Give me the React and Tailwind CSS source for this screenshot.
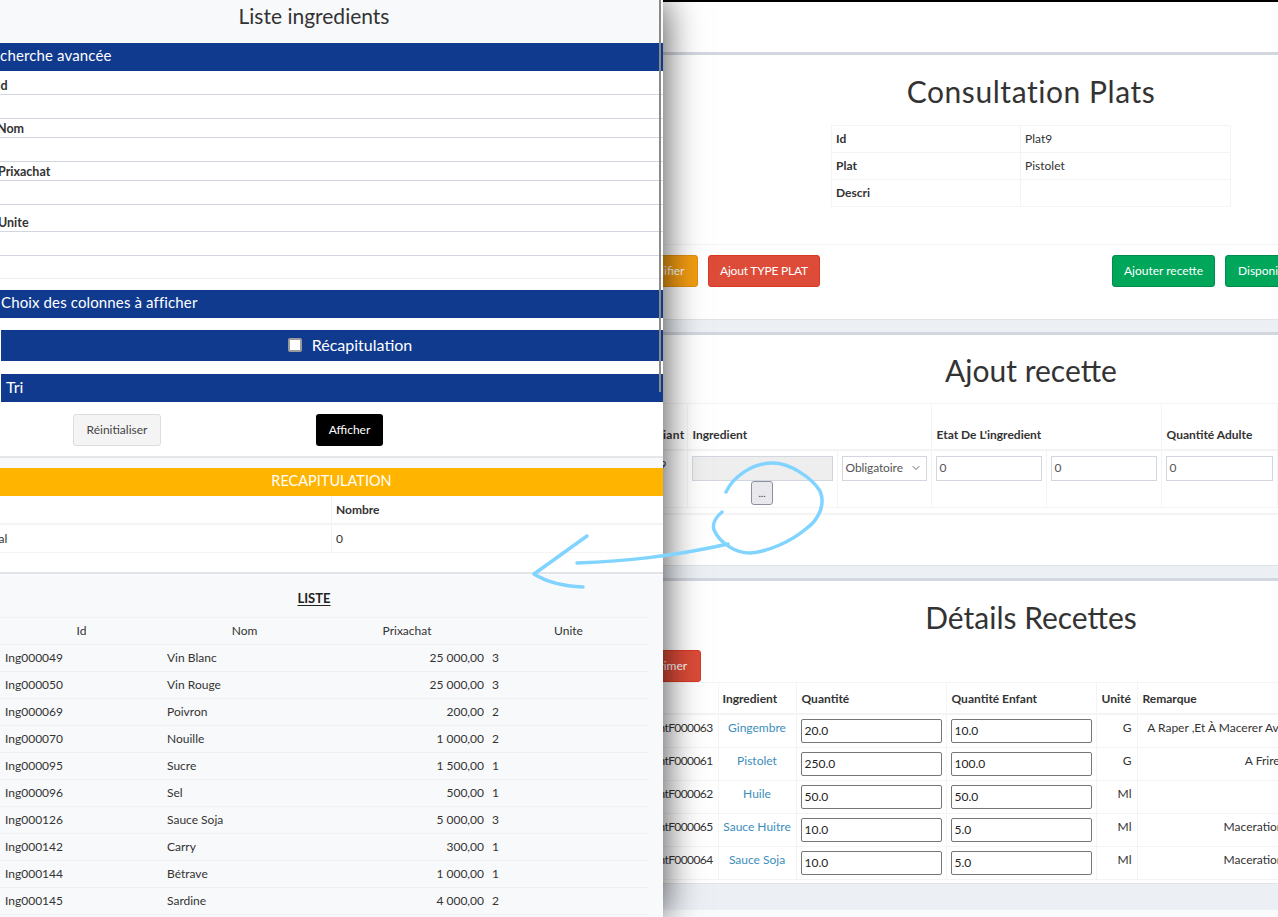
import { ChevronDown } from 'lucide-react';

const listeRows = [
    ['Ing000049', 'Vin Blanc', '25 000,00', '3'],
    ['Ing000050', 'Vin Rouge', '25 000,00', '3'],
    ['Ing000069', 'Poivron', '200,00', '2'],
    ['Ing000070', 'Nouille', '1 000,00', '2'],
    ['Ing000095', 'Sucre', '1 500,00', '1'],
    ['Ing000096', 'Sel', '500,00', '1'],
    ['Ing000126', 'Sauce Soja', '5 000,00', '3'],
    ['Ing000142', 'Carry', '300,00', '1'],
    ['Ing000144', 'Bétrave', '1 000,00', '1'],
    ['Ing000145', 'Sardine', '4 000,00', '2'],
];

const recetteRows = [
    ['IngredientF000063', 'Gingembre', '20.0', '10.0', 'G', 'A Raper ,Et À Macerer Avec Le Citron Et Sel.'],
    ['IngredientF000061', 'Pistolet', '250.0', '100.0', 'G', 'A Frire'],
    ['IngredientF000062', 'Huile', '50.0', '50.0', 'Ml', ''],
    ['IngredientF000065', 'Sauce Huitre', '10.0', '5.0', 'Ml', 'Maceration Au'],
    ['IngredientF000064', 'Sauce Soja', '10.0', '5.0', 'Ml', 'Maceration Au'],
];

const Band = ({ children, className = '' }) => (
    <div className={`bg-[#0f3a8e] text-white text-[15px] flex items-center ${className}`}>{children}</div>
);

const Field = ({ label, labelHeight, labelClass = '-ml-[2px]' }) => (
    <>
        <div className={`${labelHeight} flex items-end border-b border-[#d2d6de]`}>
            <span className={`${labelClass} text-[12.5px] leading-[16px] font-bold text-[#333]`}>{label}</span>
        </div>
        <div className="h-[24px] border-b border-[#d2d6de]" />
    </>
);

const Drawer = () => (
    <aside className="relative z-10 w-[663px] h-[917px] shrink-0 overflow-hidden bg-white shadow-[0_0_36px_rgba(0,0,0,0.75)]">
        <div className="h-[43px] bg-[#f8f9fb] flex items-center justify-center pr-[35px] pb-[12px] text-[21px] text-[#333]">
            Liste ingredients
        </div>
        <Band className="h-[28px] pb-[3px]">
            <span className="-ml-[17px] whitespace-nowrap tracking-[0.13px]">Recherche avancée</span>
        </Band>
        <Field label="Id" labelHeight="h-[24px]" labelClass="-ml-[3px]" />
        <Field label="Nom" labelHeight="h-[19px]" labelClass="-ml-[3px]" />
        <Field label="Prixachat" labelHeight="h-[19px]" />
        <Field label="Unite" labelHeight="h-[27px]" />
        <div className="h-[23px] border-b border-[#eeeeee]" />

        <Band className="mt-[11px] h-[28px] pl-[1px] pb-[3px] tracking-[0.13px]">Choix des colonnes à afficher</Band>
        <Band className="mt-[12px] ml-[1px] h-[31px] justify-center gap-[10px] pl-[36px] pb-[1px] text-[16px]">
            <span className="w-[14px] h-[14px] bg-white border-2 border-[#9a9a9a] rounded-[2px]" />
            <span>Récapitulation</span>
        </Band>
        <Band className="mt-[13px] ml-[1px] h-[28px] pl-[5px] pb-[2px] text-[16px]">Tri</Band>

        <div className="mt-[12px] ml-[73px] flex gap-[155px]">
            <button className="w-[88px] h-[32px] bg-[#f4f4f4] border border-[#dddddd] rounded-[3px] text-[12px] text-[#444]">Réinitialiser</button>
            <button className="w-[67px] h-[32px] bg-black rounded-[3px] text-[12px] text-white">Afficher</button>
        </div>

        <div className="mt-[10px] h-[12px] bg-[#f8f9fb] border-t-2 border-[#e6e6e6]" />
        <div className="h-[28px] pb-[3px] bg-[#ffb400] text-white text-[14.5px] flex items-center justify-center">RECAPITULATION</div>
        <div className="flex h-[29px] border-b-2 border-[#f4f4f4] text-[12px] font-bold text-[#333]">
            <div className="w-[332px] border-r border-[#f4f4f4]" />
            <div className="flex items-center pl-[4px]">Nombre</div>
        </div>
        <div className="flex h-[28px] border-b border-[#f4f4f4] text-[12px] text-[#333]">
            <div className="w-[332px] border-r border-[#f4f4f4] flex items-center">
                <span className="-ml-[18px]">Total</span>
            </div>
            <div className="flex items-center pl-[4px]">0</div>
        </div>
        <div className="h-[21px] border-b-2 border-[#e2e4e8]" />

        <div className="bg-[#f8f9fb] h-[345px]">
            <div className="h-[43px] pt-[15px] w-[628px] text-center text-[13px] font-bold text-[#222]">
                <span className="underline underline-offset-2">LISTE</span>
            </div>
            <table className="w-[649px] table-fixed border-collapse text-[12px] text-[#333]">
                <thead>
                    <tr className="h-[27px] border-y border-[#eef0f2] font-normal">
                        <th className="w-[163px] font-normal">Id</th>
                        <th className="w-[163px] font-normal">Nom</th>
                        <th className="w-[162px] font-normal">Prixachat</th>
                        <th className="font-normal">Unite</th>
                    </tr>
                </thead>
                <tbody>
                    {listeRows.map((row) => (
                        <tr key={row[0]} className="h-[27px] border-b border-[#eef0f2]">
                            <td className="pl-[5px]">{row[0]}</td>
                            <td className="pl-[4px]">{row[1]}</td>
                            <td className="pr-[4px] text-right">{row[2]}</td>
                            <td className="pl-[4px]">{row[3]}</td>
                        </tr>
                    ))}
                </tbody>
            </table>
        </div>

        {/* barre de défilement */}
        <div className="absolute left-[659px] top-0 w-[2px] h-[392px] bg-[#8a8a8a]" />
    </aside>
);

const BoxTitle = ({ children, className = '' }) => (
    <h1 className={`text-center text-[30px] leading-none text-[#333] ${className}`}>{children}</h1>
);

const Consultation = () => (
    <section className="h-[268px] bg-white border-t-[3px] border-[#d2d6de] border-b border-b-[#dfe2e7]">
        <BoxTitle className="pt-[21px] tracking-[0.55px]">Consultation Plats</BoxTitle>
        <table className="mt-[19px] mx-auto w-[400px] table-fixed border-collapse text-[12px] text-[#333]">
            <tbody>
                {[['Id', 'Plat9'], ['Plat', 'Pistolet'], ['Descri', '']].map(([k, v]) => (
                    <tr key={k} className="h-[27px]">
                        <td className="w-[189px] border border-[#f4f4f4] pl-[4px] font-bold">{k}</td>
                        <td className="border border-[#f4f4f4] pl-[4px]">{v}</td>
                    </tr>
                ))}
            </tbody>
        </table>
        <div className="mt-[37px] pt-[10px] border-t border-[#f4f4f4] flex text-[12px] text-white">
            <button className="-ml-[45px] w-[80px] h-[32px] pl-[8px] bg-[#f39c12] border border-[#e08e0b] rounded-[3px]">Modifier</button>
            <button className="ml-[10px] w-[112px] h-[32px] tracking-[-0.2px] bg-[#dd4b39] border border-[#d73925] rounded-[3px]">Ajout TYPE PLAT</button>
            <button className="ml-[292px] w-[103px] h-[32px] bg-[#00a65a] border border-[#008d4c] rounded-[3px]">Ajouter recette</button>
            <button className="ml-[10px] px-[12px] h-[32px] shrink-0 bg-[#00a65a] border border-[#008d4c] rounded-[3px]">Disponible</button>
        </div>
    </section>
);

const AjoutRecette = () => (
    <section className="mt-[12px] h-[234px] bg-white border-t-[3px] border-[#d2d6de] border-b border-b-[#dfe2e7]">
        <BoxTitle className="pt-[20px]">Ajout recette</BoxTitle>
        <table className="mt-[18px] -ml-[29px] w-[643px] table-fixed border-collapse text-[12px] text-[#333]">
            <colgroup>
                <col className="w-[53px]" />
                <col className="w-[150px]" />
                <col className="w-[94px]" />
                <col className="w-[115px]" />
                <col className="w-[115px]" />
                <col className="w-[116px]" />
            </colgroup>
            <thead>
                <tr className="h-[46px] border-y border-[#f4f4f4] border-b-2 font-bold">
                    <th className="pr-[2px] pt-[18px] text-right tracking-[0.3px] border-r border-[#f4f4f4]">Variant</th>
                    <th colSpan={2} className="pl-[5px] pt-[18px] text-left border-r border-[#f4f4f4]">Ingredient</th>
                    <th colSpan={2} className="pl-[5px] pt-[18px] text-left border-r border-[#f4f4f4]">Etat De L'ingredient</th>
                    <th className="pl-[5px] pt-[18px] text-left border-r border-[#f4f4f4]">Quantité Adulte</th>
                </tr>
            </thead>
            <tbody>
                <tr className="h-[58px] align-top border-b border-[#f4f4f4]">
                    <td className="pr-[20px] pt-[5px] text-right border-r border-[#f4f4f4]">Plat9</td>
                    <td className="px-[4px] pt-[5px] border-r border-[#f4f4f4]">
                        <div className="h-[25px] bg-[#eeeeee] border border-[#d2d6de]" />
                        <button className="block mx-auto w-[22px] h-[24px] bg-[#e9e9ed] border border-[#8f8f9d] rounded-[3px] text-[10px] leading-none">...</button>
                    </td>
                    <td className="px-[4px] pt-[5px] border-r border-[#f4f4f4]">
                        <div className="h-[25px] border border-[#d2d6de] flex items-center justify-between pl-[3px] pr-[4px] text-[#555]">
                            <span className="tracking-[-0.1px]">Obligatoire</span>
                            <ChevronDown size={12} strokeWidth={1.75} />
                        </div>
                    </td>
                    {[0, 1, 2].map((i) => (
                        <td key={i} className="px-[4px] pt-[5px] border-r border-[#f4f4f4]">
                            <div className="h-[25px] border border-[#d2d6de] flex items-center pl-[3px] text-[#555]">0</div>
                        </td>
                    ))}
                </tr>
            </tbody>
        </table>
        <div className="mt-[5px] border-t-2 border-[#f4f4f4]" />
    </section>
);

const DetailsRecettes = () => (
    <section className="mt-[12px] h-[306px] bg-white border-t-[3px] border-[#d2d6de] border-b border-b-[#dfe2e7]">
        <BoxTitle className="pt-[21px]">Détails Recettes</BoxTitle>
        <button className="block mt-[18px] -ml-[38px] w-[76px] h-[32px] pr-[6px] bg-[#dd4b39] border border-[#d73925] rounded-[3px] text-[12px] text-white">Supprimer</button>
        <table className="-ml-[61px] w-[785px] table-fixed border-collapse text-[12px] text-[#333]">
            <thead>
                <tr className="h-[31.5px] border-y border-[#f4f4f4] border-b-2 text-left font-bold">
                    <th className="w-[116px] border-r border-[#f4f4f4]" />
                    <th className="w-[78px] pl-[4px] pt-[2px] border-r border-[#f4f4f4]">Ingredient</th>
                    <th className="w-[150px] pl-[5px] pt-[2px] border-r border-[#f4f4f4]">Quantité</th>
                    <th className="w-[150px] pl-[5px] pt-[2px] border-r border-[#f4f4f4]">Quantité Enfant</th>
                    <th className="w-[41px] pl-[5px] pt-[2px] border-r border-[#f4f4f4]">Unité</th>
                    <th className="w-[250px] pl-[5px] pt-[2px]">Remarque</th>
                </tr>
            </thead>
            <tbody>
                {recetteRows.map((row) => (
                    <tr key={row[0]} className="h-[33px] align-top border-b border-[#f4f4f4]">
                        <td className="pt-[4px] pr-[5px] text-right tracking-[-0.6px] whitespace-nowrap overflow-hidden border-r border-[#f4f4f4]">{row[0]}</td>
                        <td className="pt-[4px] text-center whitespace-nowrap text-[#3c8dbc] border-r border-[#f4f4f4]">{row[1]}</td>
                        <td className="px-[4px] pt-[4px] border-r border-[#f4f4f4]">
                            <div className="h-[24px] bg-white border border-[#767676] rounded-[2px] flex items-center pl-[3px] text-[#222]">{row[2]}</div>
                        </td>
                        <td className="px-[4px] pt-[4px] border-r border-[#f4f4f4]">
                            <div className="h-[24px] bg-white border border-[#767676] rounded-[2px] flex items-center pl-[3px] text-[#222]">{row[3]}</div>
                        </td>
                        <td className="pt-[4px] pr-[5px] text-right border-r border-[#f4f4f4]">{row[4]}</td>
                        <td className="pt-[4px] text-center whitespace-nowrap">{row[5]}</td>
                    </tr>
                ))}
            </tbody>
        </table>
    </section>
);

const Annotation = () => (
    <svg className="absolute inset-0 z-20 pointer-events-none" width="1278" height="917" viewBox="0 0 1278 917" fill="none" stroke="#80d4ff" strokeWidth="3.5" strokeLinecap="round" strokeLinejoin="round">
        <path d="M577 563 C 625 561 670 557 728 544" />
        <path d="M587 536 L534 574 C 545 581 560 586 583 587" />
        <path d="M726 492 C 733 477 752 463 773 463 C 790 463 812 478 820 491 C 826 505 818 520 807 528 C 792 541 768 552 750 553 C 735 553 720 543 714 530 C 712 524 716 517 722 512" />
    </svg>
);

export default function App() {
    return (
        <div className="relative flex w-[1278px] h-[917px] overflow-hidden bg-[#ecf0f5] [font-family:Lato,sans-serif]">
            <Drawer />
            <main className="w-[615px] h-[917px] overflow-hidden">
                <div className="w-[736px]">
                    <div className="h-[52px] bg-white border-t-2 border-black" />
                    <Consultation />
                    <AjoutRecette />
                    <DetailsRecettes />
                    <div className="mt-[26px] h-[7px] bg-[#f9fafc]" />
                </div>
            </main>
            <Annotation />
        </div>
    );
}
